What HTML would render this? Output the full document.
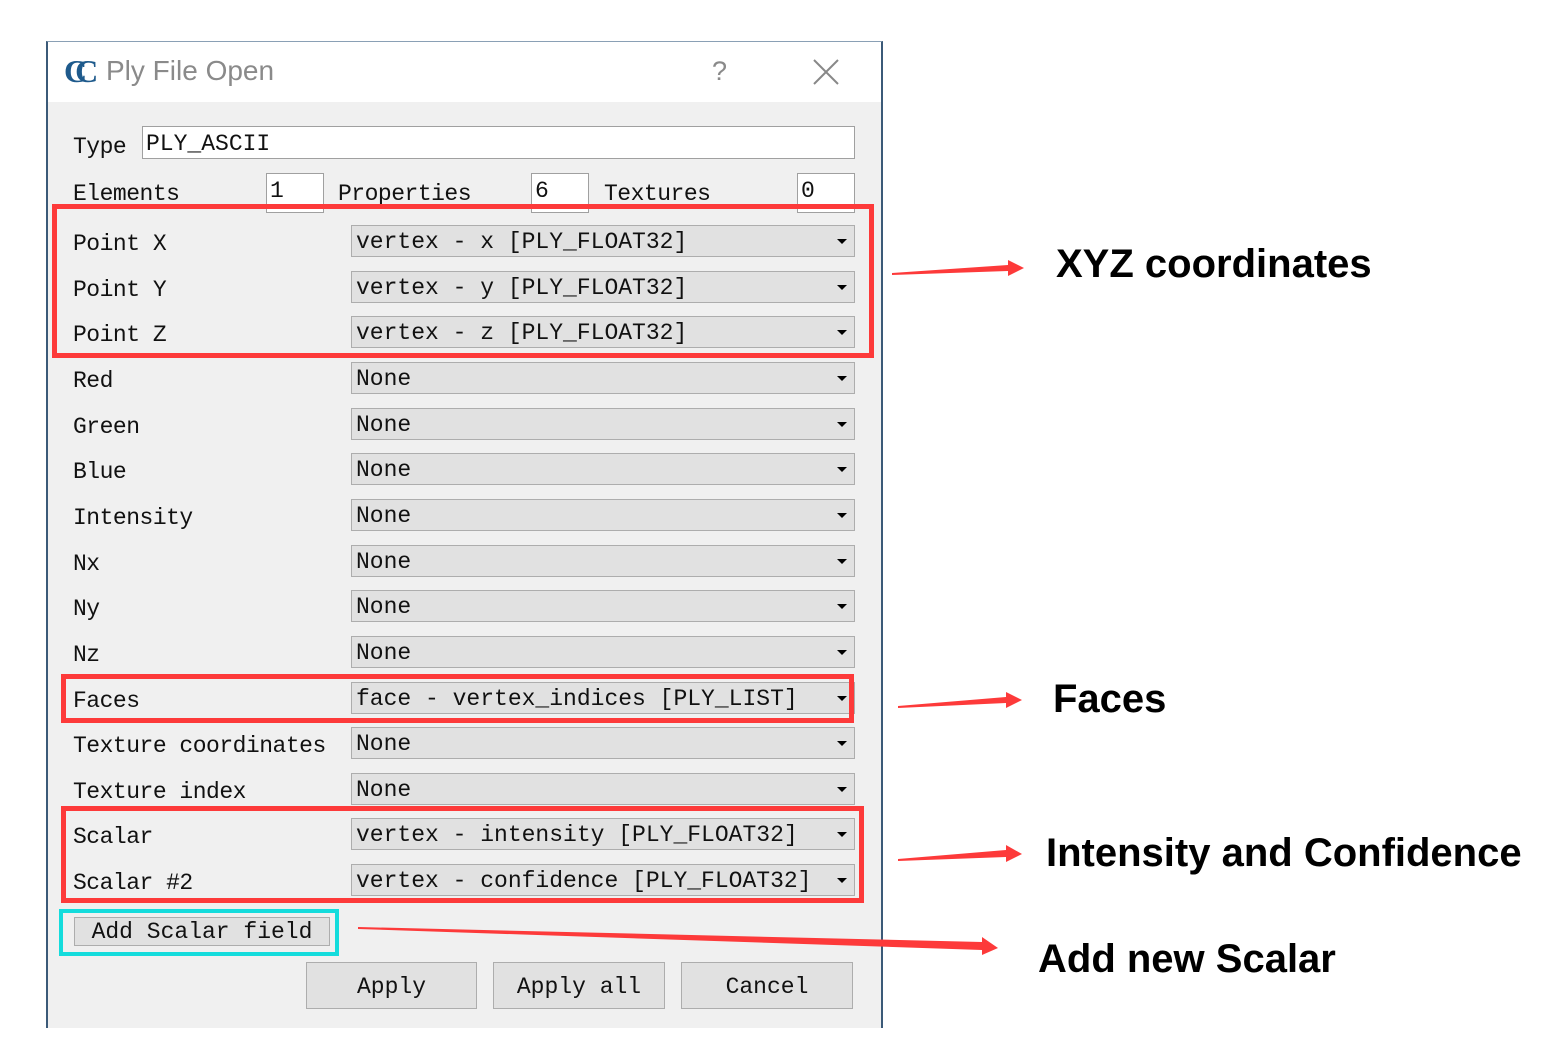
<!DOCTYPE html>
<html><head><meta charset="utf-8"><style>
*{margin:0;padding:0;box-sizing:border-box}
body{width:1550px;height:1052px;background:#fff;position:relative;overflow:hidden;font-family:"Liberation Mono",monospace}
.a{position:absolute}
.dlg{left:46px;top:41px;width:837px;height:987px;background:#f0f0f0;border-left:2px solid #3b5a78;border-right:2px solid #3b5a78;border-top:1px solid #8aa0b5}
.tb{left:48px;top:42px;width:833px;height:60px;background:#fff}
.lbl{font-size:23px;color:#111;line-height:32px;letter-spacing:-0.5px}
.inp{background:#fff;border:1px solid #a0a0a0;font-size:23px;line-height:34px;padding-left:3px;color:#111}
.cb{left:351px;width:504px;height:32px;background:#e1e1e1;border:1px solid #adadad;font-size:23px;line-height:33px;padding-left:4px;color:#111}
.cb:after{content:"";position:absolute;right:7px;top:13px;border-left:5px solid transparent;border-right:5px solid transparent;border-top:5px solid #000}
.btn{background:#e1e1e1;border:1px solid #adadad;font-size:23px;text-align:center;color:#111}
.rb{border:5px solid #fd3a3a}
.ann{font-family:"Liberation Sans",sans-serif;font-weight:bold;font-size:40px;color:#000;line-height:40px}
</style></head><body>
<div class="a dlg"></div>
<div class="a tb"></div>
<div class="a" style="left:64px;top:57px;width:34px;height:28px;font-family:'Liberation Serif',serif;font-weight:bold;font-size:32px;color:#1e5a8c;line-height:28px;letter-spacing:-12px">CC</div>
<div class="a" style="left:106px;top:55px;font-family:'Liberation Sans',sans-serif;font-size:28px;color:#8a8a8a">Ply File Open</div>
<div class="a" style="left:712px;top:56px;font-family:'Liberation Sans',sans-serif;font-size:27px;color:#8a8a8a">?</div>
<svg class="a" style="left:812px;top:58px" width="28" height="28"><path d="M2 2L26 26M26 2L2 26" stroke="#888" stroke-width="2"/></svg>

<div class="a lbl" style="left:73px;top:131px">Type</div>
<div class="a inp" style="left:142px;top:126px;width:713px;height:33px">PLY_ASCII</div>
<div class="a lbl" style="left:73px;top:178px">Elements</div>
<div class="a inp" style="left:266px;top:173px;width:58px;height:40px">1</div>
<div class="a lbl" style="left:338px;top:178px">Properties</div>
<div class="a inp" style="left:531px;top:173px;width:58px;height:40px">6</div>
<div class="a lbl" style="left:604px;top:178px">Textures</div>
<div class="a inp" style="left:797px;top:173px;width:58px;height:40px">0</div>

<div class="a lbl" style="left:73px;top:228px">Point X</div><div class="a cb" style="top:225px">vertex - x [PLY_FLOAT32]</div>
<div class="a lbl" style="left:73px;top:274px">Point Y</div><div class="a cb" style="top:271px">vertex - y [PLY_FLOAT32]</div>
<div class="a lbl" style="left:73px;top:319px">Point Z</div><div class="a cb" style="top:316px">vertex - z [PLY_FLOAT32]</div>
<div class="a lbl" style="left:73px;top:365px">Red</div><div class="a cb" style="top:362px">None</div>
<div class="a lbl" style="left:73px;top:411px">Green</div><div class="a cb" style="top:408px">None</div>
<div class="a lbl" style="left:73px;top:456px">Blue</div><div class="a cb" style="top:453px">None</div>
<div class="a lbl" style="left:73px;top:502px">Intensity</div><div class="a cb" style="top:499px">None</div>
<div class="a lbl" style="left:73px;top:548px">Nx</div><div class="a cb" style="top:545px">None</div>
<div class="a lbl" style="left:73px;top:593px">Ny</div><div class="a cb" style="top:590px">None</div>
<div class="a lbl" style="left:73px;top:639px">Nz</div><div class="a cb" style="top:636px">None</div>
<div class="a lbl" style="left:73px;top:685px">Faces</div><div class="a cb" style="top:682px">face - vertex_indices [PLY_LIST]</div>
<div class="a lbl" style="left:73px;top:730px">Texture coordinates</div><div class="a cb" style="top:727px">None</div>
<div class="a lbl" style="left:73px;top:776px">Texture index</div><div class="a cb" style="top:773px">None</div>
<div class="a lbl" style="left:73px;top:821px">Scalar</div><div class="a cb" style="top:818px">vertex - intensity [PLY_FLOAT32]</div>
<div class="a lbl" style="left:73px;top:867px">Scalar #2</div><div class="a cb" style="top:864px">vertex - confidence [PLY_FLOAT32]</div>

<div class="a btn" style="left:74px;top:917px;width:256px;height:29px;line-height:29px">Add Scalar field</div>
<div class="a btn" style="left:306px;top:962px;width:171px;height:47px;line-height:49px">Apply</div>
<div class="a btn" style="left:493px;top:962px;width:172px;height:47px;line-height:49px">Apply all</div>
<div class="a btn" style="left:681px;top:962px;width:172px;height:47px;line-height:49px">Cancel</div>

<div class="a rb" style="left:52px;top:204px;width:822px;height:154px"></div>
<div class="a rb" style="left:61px;top:674px;width:793px;height:49px"></div>
<div class="a rb" style="left:61px;top:806px;width:803px;height:97px"></div>
<div class="a" style="left:59px;top:909px;width:280px;height:47px;border:4px solid #14dcdc"></div>

<svg class="a" style="left:0;top:0" width="1550" height="1052">
<g fill="#fd3a3a">
<polygon points="892,273 1008,265 1008,260 1024,268 1008,276 1008,271 892,275"/>
<polygon points="898,706 1006,697 1006,692 1022,700 1006,708 1006,703 898,708"/>
<polygon points="898,859 1006,850 1006,845 1022,854 1006,862 1006,857 898,861"/>
<polygon points="358,927 982,942 982,937 998,948 982,955 982,950 358,929"/>
</g></svg>
<div class="a ann" style="left:1056px;top:244px">XYZ coordinates</div>
<div class="a ann" style="left:1053px;top:679px">Faces</div>
<div class="a ann" style="left:1046px;top:833px">Intensity and Confidence</div>
<div class="a ann" style="left:1038px;top:939px">Add new Scalar</div>
</body></html>
